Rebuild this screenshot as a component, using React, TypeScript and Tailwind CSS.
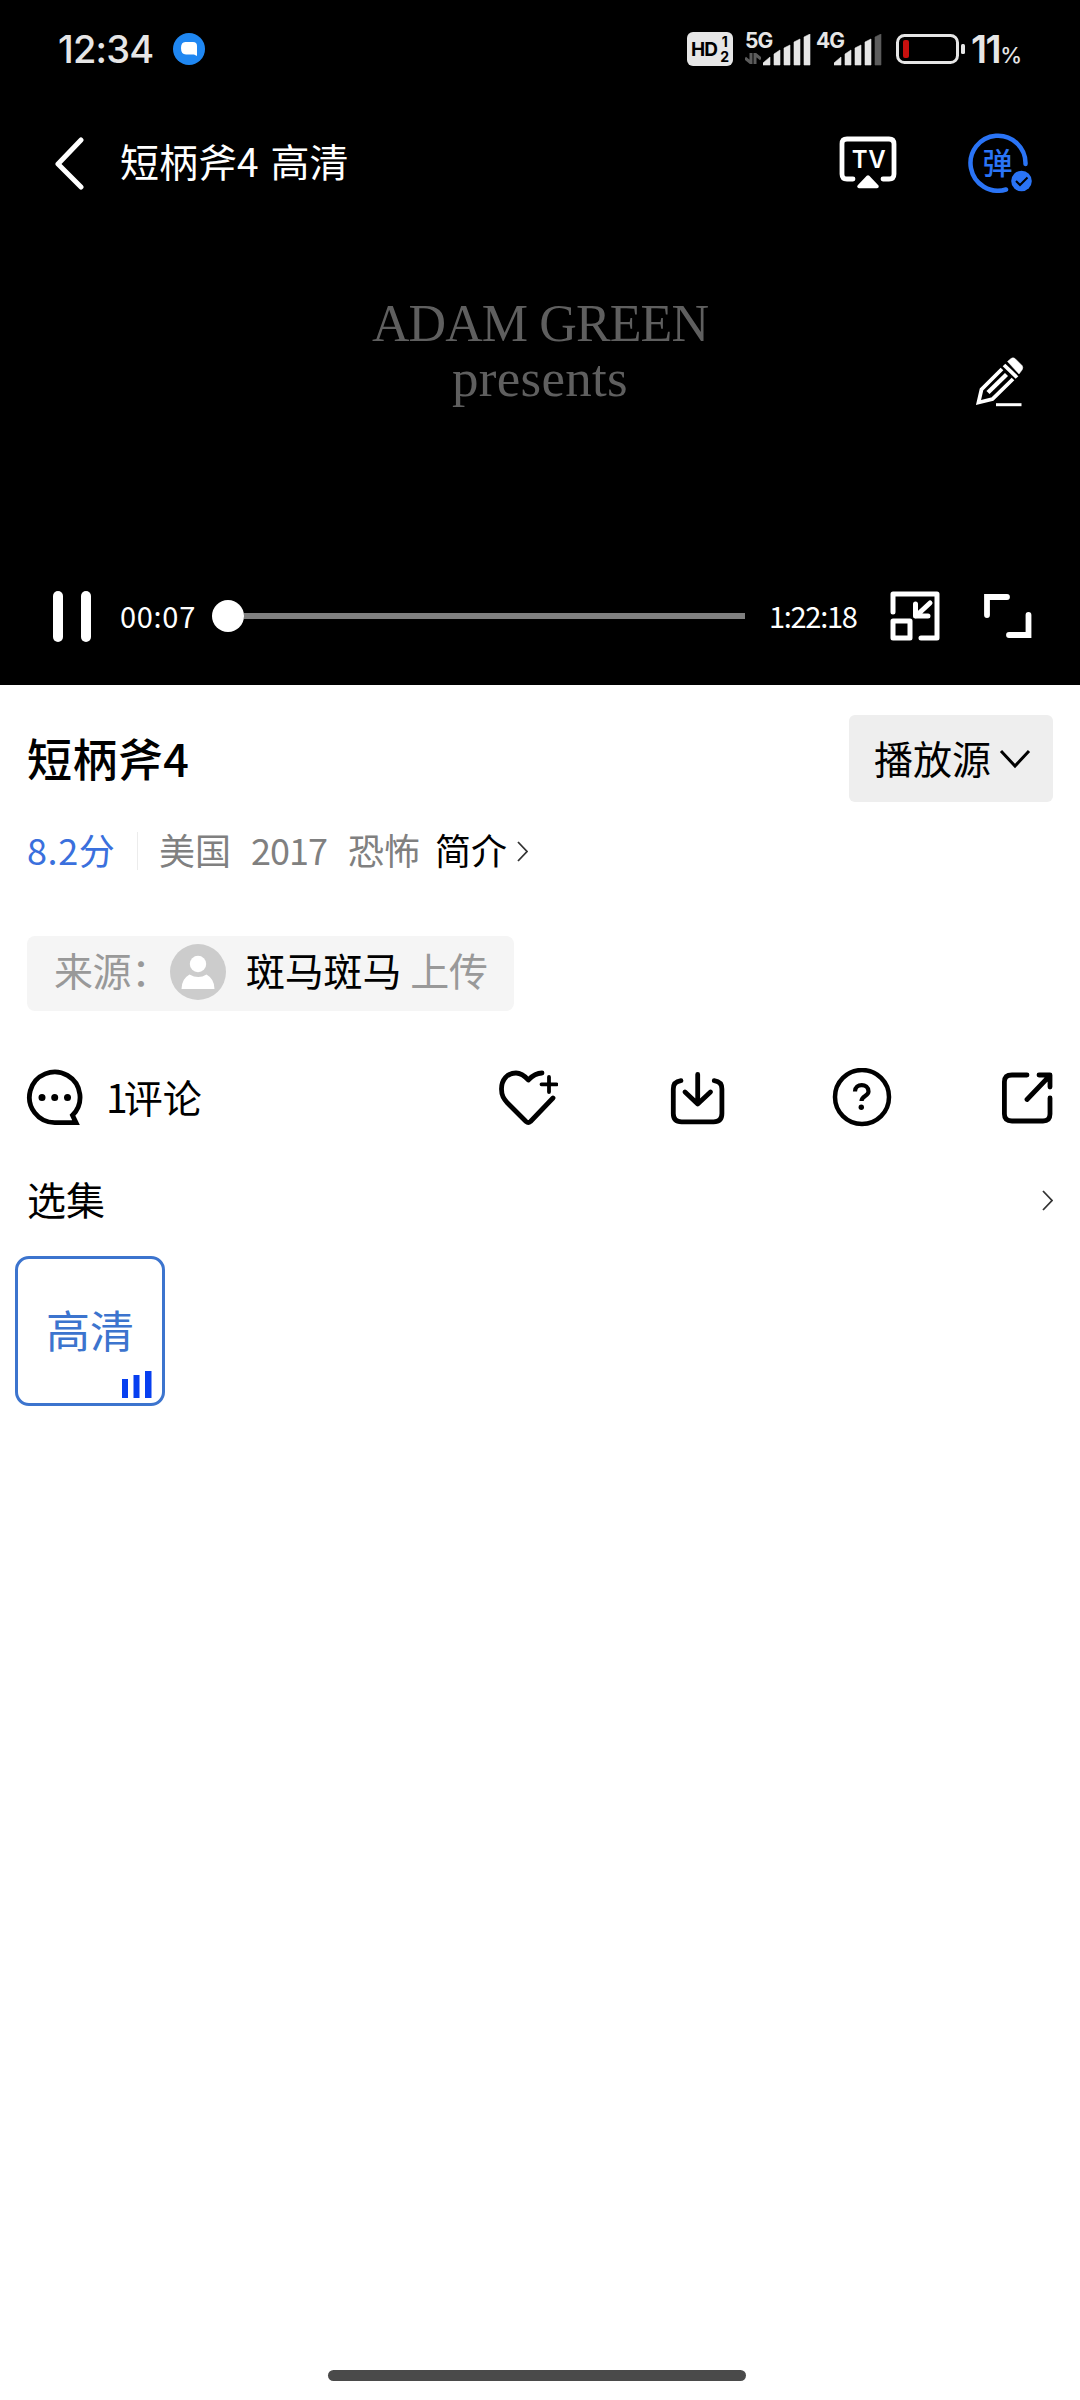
import type { ReactNode } from "react";

function SignalBars({ weak = false }: { weak?: boolean }) {
    return (
        <svg width="48" height="32" viewBox="0 0 48 32" fill="#e6e6e6" stroke="#e6e6e6" strokeWidth="0.6" strokeLinejoin="round">
            <path d="M0 31v-2l7-6v8z" />
            <path d="M11 31V20l6-4v15z" />
            <path d="M21 31V14l6-3v20z" />
            <path d="M31 31V8l6-3v26z" />
            <path d="M41 31V3l6-3v31z" fill={weak ? "#5c5c5c" : "#e6e6e6"} stroke={weak ? "#5c5c5c" : "#e6e6e6"} />
        </svg>
    );
}

function StatusBar() {
    return (
        <div className="flex h-[98px] items-center pl-[58px] pr-[57px] text-[#e6e6e6]">
            <span className="w-[115px] whitespace-nowrap font-['Inter',sans-serif] text-[38px] leading-none font-medium tracking-[-0.8px]">12:34</span>
            <svg width="32" height="32" viewBox="0 0 32 32">
                <circle cx="16" cy="16" r="16" fill="#1f87f2" />
                <path d="M13 9h7q4 0 4 4v10l-3-1.500h-8q-5 0-5-6.500t5-6z" fill="#fff" />
            </svg>
            <div className="ml-auto flex items-center font-['Inter',sans-serif] font-bold">
                <div className="flex h-[34px] w-[46px] items-center justify-center gap-[3px] rounded-md bg-[#e6e6e6] text-black">
                    <span className="text-[19px] leading-none tracking-[-0.8px]">HD</span>
                    <span className="flex flex-col text-center text-[14px] leading-[15px]"><span>1</span><span>2</span></span>
                </div>
                <div className="ml-3 flex h-[34px]">
                    <div className="flex w-[18px] flex-col">
                        <span className="text-[21px] leading-[17px] tracking-[-1px]">5G</span>
                        <svg className="mt-1" width="16" height="11" viewBox="0 0 16 11" fill="none" stroke="#5c5c5c" strokeWidth="3">
                            <path d="M6 0v10L0 5M10 11V1l6 5" />
                        </svg>
                    </div>
                    <div className="pt-0.5"><SignalBars /></div>
                </div>
                <div className="ml-[5px] flex h-[34px]">
                    <span className="w-[18px] text-[21px] leading-[17px] tracking-[-1px]">4G</span>
                    <div className="pt-0.5"><SignalBars weak /></div>
                </div>
                <svg className="ml-[14px]" width="70" height="30" viewBox="0 0 70 30">
                    <rect x="1.5" y="1.5" width="60" height="27" rx="7" fill="none" stroke="#e6e6e6" strokeWidth="3" />
                    <rect x="7" y="6" width="6" height="18" rx="2" fill="#c8100e" />
                    <rect x="65" y="10" width="4" height="10" rx="1.5" fill="#e6e6e6" />
                </svg>
                <div className="ml-[5px] flex w-[52px] items-baseline leading-none">
                    <span className="text-[38px] font-semibold tracking-[-1.5px]">11</span>
                    <span className="text-[22px] font-medium">%</span>
                </div>
            </div>
        </div>
    );
}

function PlayerHeader() {
    return (
        <div className="flex h-[130px] items-center pl-[54px] pr-[47px] text-white">
            <svg width="31" height="54" viewBox="0 0 31 54" fill="none" stroke="currentColor" strokeWidth="5" strokeLinecap="round" strokeLinejoin="round">
                <path d="M27 4 4 28l23 23" />
            </svg>
            <span className="ml-[35px] pb-1.5 text-[39px] leading-none [word-spacing:3px]">短柄斧4 高清</span>
            <svg className="ml-auto" width="58" height="54" viewBox="0 0 58 54">
                <path d="M14 43H8q-5 0-5-5V8q0-5 5-5h42q5 0 5 5v30q0 5-5 5h-6" fill="none" stroke="#fff" strokeWidth="4.8" strokeLinecap="round" />
                <path d="M29 41 20 50.5h18z" fill="#fff" stroke="#fff" strokeWidth="3.5" strokeLinejoin="round" />
                <text x="30" y="31.5" textAnchor="middle" fill="#fff" fontFamily="Inter" fontSize="24" fontWeight="600" letterSpacing="0.6">TV</text>
            </svg>
            <svg className="ml-[71px]" width="65" height="60" viewBox="0 0 65 60">
                <path d="M57.5 31A27.5 27.5 0 1 0 38 56.5" fill="none" stroke="#2a74f6" strokeWidth="4.5" strokeLinecap="round" />
                <text x="29.5" y="40.5" textAnchor="middle" fill="#2a74f6" fontFamily="Noto Sans CJK SC" fontSize="30" fontWeight="500">弹</text>
                <circle cx="53.500" cy="48" r="10.3" fill="#2a74f6" />
                <path d="m48 48 4 4 7.500-7.500" fill="none" stroke="#000" strokeWidth="2" />
            </svg>
        </div>
    );
}

function PlayerControls() {
    return (
        <div className="flex h-[138px] items-center pl-[53px] pr-[48px] text-white">
            <div className="flex gap-[18px]">
                <span className="h-[51px] w-[10px] rounded-full bg-white" />
                <span className="h-[51px] w-[10px] rounded-full bg-white" />
            </div>
            <span className="ml-[29px] w-[92px] pb-0.5 text-[29px] leading-none tracking-[0.7px]">00:07</span>
            <div className="flex w-[533px] items-center">
                <span className="size-8 rounded-full bg-white" />
                <span className="h-1.5 flex-1 bg-[#808080]" />
            </div>
            <span className="ml-6 w-[121px] pb-0.5 text-[29px] leading-none tracking-[-1.3px]">1:22:18</span>
            <svg width="50" height="50" viewBox="0 0 50 50" fill="none" stroke="currentColor" strokeWidth="5" strokeLinecap="round" strokeLinejoin="round">
                <path d="M3 21V3h44v44H31M3 30h17v17H3zM40 12 26 25M25.500 13v12H38" />
            </svg>
            <svg className="ml-[44px]" width="48" height="46" viewBox="0 0 48 46" fill="none" stroke="currentColor" strokeWidth="5.8" strokeLinecap="round">
                <path d="M3 22V4h20M25 42h19.500V22" />
            </svg>
        </div>
    );
}

function Player() {
    return (
        <div className="flex h-[685px] flex-col bg-black">
            <StatusBar />
            <PlayerHeader />
            <div className="relative flex flex-1 flex-col items-center pt-[68px] font-['Liberation_Serif',serif] leading-[55px] text-[#5f5f5f]">
                <span className="text-[52px] tracking-[-0.9px]">ADAM GREEN</span>
                <span className="text-[53px] tracking-[0.3px]">presents</span>
                <svg className="absolute top-[129px] right-[56px]" width="50" height="50" viewBox="0 0 50 50" fill="none" stroke="#fff">
                    <path d="M28 12 7.500 32.500 4.500 45.500 18.500 42 39 22" strokeWidth="3.8" />
                    <path d="M14 35.500 32.500 17.500" strokeWidth="4.4" />
                    <path d="m30 8 13 12.500" strokeWidth="3.8" />
                    <path d="M33.500 4.500 37 1.500q2-1.500 4 0l7 7q1.500 2 0 4.500l-3 4z" fill="#fff" strokeWidth="0.5" />
                    <path d="M22 47.700h25.500" strokeWidth="3" />
                </svg>
            </div>
            <PlayerControls />
        </div>
    );
}

function ActionIcon({ className, children }: { className?: string; children: ReactNode }) {
    return (
        <svg className={className} width="60" height="60" viewBox="0 0 60 60" fill="none" stroke="currentColor" strokeWidth="4.8" strokeLinecap="round" strokeLinejoin="round">
            {children}
        </svg>
    );
}

function Chevron() {
    return (
        <svg width="11" height="21" viewBox="0 0 11 21" fill="none" stroke="#333" strokeWidth="1.8">
            <path d="m1 1 9 9.500L1 20" />
        </svg>
    );
}

function Details() {
    return (
        <div className="flex flex-1 flex-col pt-[30px]">
            <div className="flex h-[87px] items-center justify-between px-[27px]">
                <h1 className="pb-0.5 text-[45px] leading-none font-medium tracking-[0.4px]">短柄斧4</h1>
                <button className="flex h-[87px] w-[204px] items-center rounded-md bg-[#eee] pl-[25px] text-[39px] leading-none">
                    <span className="pb-0.5">播放源</span>
                    <svg className="ml-2" width="32" height="22" viewBox="0 0 32 22" fill="none" stroke="currentColor" strokeWidth="3">
                        <path d="m2 3 14 15L30 3" />
                    </svg>
                </button>
            </div>

            <div className="mt-[22px] flex h-[54px] items-center pl-[27px] text-[36px] leading-none text-[#808080]">
                <span className="w-[110px] pb-1 tracking-[0.6px] text-[#3a70dd]">8.2分</span>
                <span className="h-[38px] w-px bg-[#ececec]" />
                <span className="ml-[21px] w-[92px] pb-1">美国</span>
                <span className="w-[97px] pb-1 tracking-[-1px]">2017</span>
                <span className="w-[87px] pb-1">恐怖</span>
                <span className="w-[82px] pb-1 text-black">简介</span>
                <Chevron />
            </div>

            <div className="mt-[58px] ml-[27px] flex h-[75px] w-[487px] items-center rounded-lg bg-[#f5f5f5] pl-[27px] text-[39px] leading-none whitespace-nowrap text-[#999]">
                <span className="w-[116px] pb-2 tracking-[-0.4px]">来源：</span>
                <svg className="mb-[3px]" width="56" height="56" viewBox="0 0 56 56">
                    <circle cx="28" cy="28" r="28" fill="#ccc" />
                    <circle cx="28" cy="20" r="8.200" fill="#fff" />
                    <path d="M11.500 45q0-10 8-14.500 9 5 17 0 8 4.500 8 14.500z" fill="#fff" />
                </svg>
                <span className="ml-5 pb-2 tracking-[-0.2px] text-black">斑马斑马</span>
                <span className="ml-[9px] pb-2 tracking-[-0.2px]">上传</span>
            </div>

            <div className="mt-[57px] flex h-[60px] items-center pl-[26px] pr-[22px]">
                <ActionIcon>
                    <path d="M50 54.600 46.500 47.300A25.300 25.300 0 1 0 28.700 54.600z" strokeLinejoin="miter" />
                    <path d="M16 29.500h.01M28.700 29.500h.01M41.500 29.500h.01" strokeWidth="7" />
                </ActionIcon>
                <span className="ml-[20px] pb-1 text-[39px] leading-none"><span className="tracking-[-4px]">1</span>评论</span>
                <ActionIcon className="ml-auto">
                    <path d="M44 5Q37 5 30.300 12C25 6 22 5 18 5 9 5 3.500 12 3.500 21c0 7 2.500 10 5.500 13.500L28 53.500q2.300 2 4.500 0L55 30" />
                    <path d="M51 9v15M43.500 16.300H58.500" strokeWidth="3.8" />
                </ActionIcon>
                <ActionIcon className="ml-[110px]">
                    <path d="M13 12.700q-7.700 1-7.700 8.300v24.500q0 8.300 8.300 8.300h32q8.300 0 8.300-8.300V21q0-7.300-7.700-8.300M29.700 6.500V36M17 24l12.700 12L42.500 24" />
                </ActionIcon>
                <ActionIcon className="ml-[104px]">
                    <circle cx="30" cy="29" r="27" strokeWidth="4.500" />
                    <path d="M23 23.500c0-8.500 13.500-8.500 13.500 0 0 4.500-7 4.500-7 9.500" strokeWidth="4.200" strokeLinecap="butt" />
                    <path d="M29.300 39.300h.01" strokeWidth="5.400" />
                </ActionIcon>
                <ActionIcon className="ml-[106px]">
                    <path d="M29 7H14q-7.600 0-7.600 7v32q0 7 7.600 7h31q7 0 7-7V30M29 31.500 51 8.500M41 7h11v12" />
                </ActionIcon>
            </div>

            <div className="mt-[42px] flex h-[60px] items-center justify-between px-[27px]">
                <h2 className="pb-1 text-[39px] leading-none">选集</h2>
                <Chevron />
            </div>

            <button className="relative mt-[26px] ml-[15px] flex size-[150px] items-center justify-center rounded-[14px] border-[3px] border-[#3c74ce] pb-1 text-[44px] leading-none text-[#3c74ce]">
                高清
                <svg className="absolute right-[9px] bottom-[5px]" width="32" height="27" viewBox="0 0 32 27" fill="#073ff0">
                    <path d="M1 8h6v19H1zM12.500 4h6v23h-6zM24 0h6.500v27H24z" />
                </svg>
            </button>
        </div>
    );
}

export default function App() {
    return (
        <div className="flex h-[2400px] w-[1080px] flex-col bg-white font-['Noto_Sans_CJK_SC',sans-serif] text-black">
            <Player />
            <Details />
            <div className="mb-[19px] ml-[328px] h-[11px] w-[418px] rounded-full bg-[#4a4a4a]" />
        </div>
    );
}
